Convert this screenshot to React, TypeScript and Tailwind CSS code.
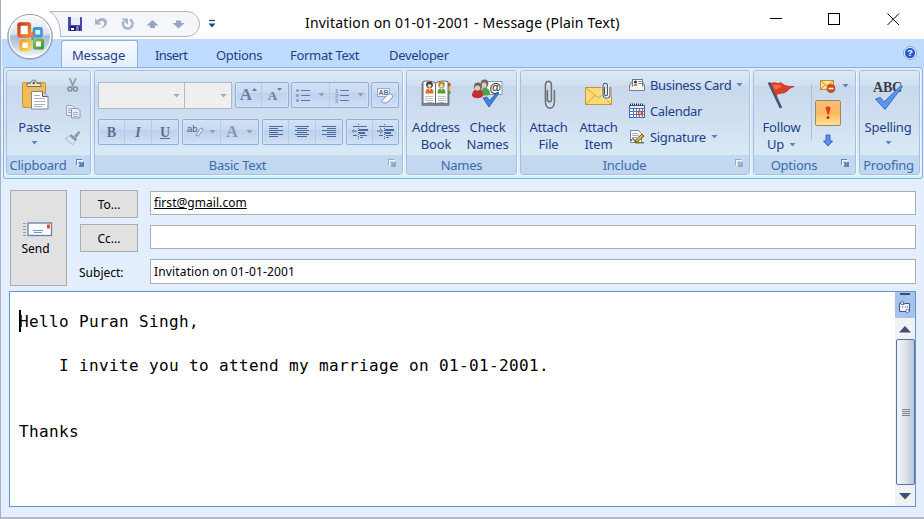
import React from "react";

const INK = "text-[#1e3f8a]";

function T({ children, c = "" }: { children: React.ReactNode; c?: string }) {
  return <span className={`whitespace-pre ${c}`}>{children}</span>;
}

function Caret({ c = "#5e83b8" }: { c?: string }) {
  return (
    <svg width="7" height="4" viewBox="0 0 7 4" className="shrink-0">
      <path d="M.5 0h6L3.500 3.500z" fill={c} />
    </svg>
  );
}

function Launcher({ c }: { c: string }) {
  return (
    <svg width="10" height="10" viewBox="0 0 10 10" className="shrink-0" shapeRendering="crispEdges">
      <path d="M1.500 7V1.500H7" fill="none" stroke={c} />
      <path d="M8.500 4v4.500H4" fill="none" stroke={c} />
      <path d="M4 4h2v1h1v-1h1v4H4v-1h1v-1H4z" fill={c} />
      <path d="M2.500 8V2.500H8" fill="none" stroke="#fff" opacity=".8" />
    </svg>
  );
}

function Group({ w, label, launcher, labelClass = "", children }: { w: string; label: string; launcher?: string; labelClass?: string; children: React.ReactNode }) {
  return (
    <section className={`${w} flex h-[105px] shrink-0 flex-col overflow-hidden rounded-[3px] border border-[#a3c1e2] shadow-[1px_1px_0_#eef6ff]`}>
      <div className="flex h-[84px] bg-[linear-gradient(to_bottom,#dde8f5_0%,#d1dfef_17%,#c7d8ec_18%,#d0dff0_55%,#dae9f6_100%)]">{children}</div>
      <div className="flex h-[19px] items-center bg-linear-to-b from-[#c2d9f1] to-[#c0d8ef]">
        <div className="flex flex-1 justify-center">
          <T c={`text-[13px] leading-[19px] tracking-[-0.25px] text-[#3e6aaa] pt-px ${labelClass}`}>{label}</T>
        </div>
        {launcher && <div className="flex w-[15px] pb-[3px]"><Launcher c={launcher} /></div>}
      </div>
    </section>
  );
}

function Big({ w, icon, children }: { w: string; icon: React.ReactNode; children: React.ReactNode }) {
  return (
    <button className={`${w} flex shrink-0 flex-col items-center text-[13px] leading-[17px] tracking-[-0.2px] ${INK}`}>
      <span className="flex h-[48px] pt-[7px]">{icon}</span>
      {children}
    </button>
  );
}

function Combo({ w }: { w: string }) {
  return (
    <div className={`${w} flex h-[27px] items-center justify-end border border-[#abbac9] bg-[#efefef] pr-1`}>
      <Caret c="#a9a9a9" />
    </div>
  );
}

function Cells({ children, c = "" }: { children: React.ReactNode; c?: string }) {
  return (
    <div className={`flex h-[26px] divide-x divide-[#b3cbea] rounded-[2px] border border-[#8fb0dc] bg-[linear-gradient(to_bottom,#d3e1f3_0%,#c9daf0_40%,#bdd1ec_42%,#cfe0f6_100%)] shadow-[inset_0_0_0_1px_#d3e3f7] ${c}`}>
      {children}
    </div>
  );
}

function Cell({ w, children }: { w: string; children: React.ReactNode }) {
  return <div className={`${w} flex items-center justify-center`}>{children}</div>;
}

function Lines({ rows }: { rows: [number, number][] }) {
  return (
    <svg width="16" height="12" viewBox="0 0 16 12" shapeRendering="crispEdges">
      {rows.map(([x, w], i) => <rect key={i} x={x} y={i * 2} width={w} height="1" fill="#4a689c" />)}
    </svg>
  );
}

function Indent({ right }: { right?: boolean }) {
  return (
    <svg width="18" height="16" viewBox="0 0 18 16" shapeRendering="crispEdges">
      <path d="M2 2.500h14M2 11.500h4M9 11.500h7M9 13.500h3" stroke="#4f6c9e" fill="none" />
      <path d="M8 5h9v2H8zM8 8h6v2H8z" fill="#4a689c" />
      <path d="M7.500 0v16" stroke="#4a689c" strokeDasharray="1 1" />
      <path d={right ? "M6 7L3 4v2H0v2h3v2z" : "M0 7l3-3v2h3v2H3v2z"} fill="#8c9cb8" />
    </svg>
  );
}

function ListIcon({ numbered }: { numbered?: boolean }) {
  return (
    <svg width="14" height="16" viewBox="0 0 14 16">
      <path d="M5 3.500h9M5 8.500h9M5 13.500h9" stroke="#5876ab" />
      {[3.5, 8.5, 13.5].map((y, i) =>
        numbered
          ? <text key={y} x="0" y={y + 2} fontSize="6" fontWeight="700" fill="#8b93a3" fontFamily="Liberation Sans, sans-serif">{i + 1}</text>
          : <circle key={y} cx="1.500" cy={y} r="1.500" fill="#9299a6" />
      )}
    </svg>
  );
}

function OfficeOrb() {
  return (
    <svg width="48" height="48" viewBox="0 0 48 48">
      <defs>
        <linearGradient id="orb" x1="0" y1="0" x2="0" y2="1">
          <stop offset="0" stopColor="#fbfcfe" />
          <stop offset=".44" stopColor="#dde3ed" />
          <stop offset=".5" stopColor="#a9bbd6" />
          <stop offset=".78" stopColor="#cfdaea" />
          <stop offset="1" stopColor="#ffffff" />
        </linearGradient>
        <linearGradient id="or" x1="0" y1="0" x2="1" y2="1"><stop offset="0" stopColor="#c8381a" /><stop offset="1" stopColor="#f58a35" /></linearGradient>
        <linearGradient id="ye" x1="0" y1="0" x2="1" y2="1"><stop offset="0" stopColor="#f9a11b" /><stop offset="1" stopColor="#fcd535" /></linearGradient>
        <linearGradient id="gr" x1="0" y1="0" x2="1" y2="1"><stop offset="0" stopColor="#8cc152" /><stop offset="1" stopColor="#3f9a3a" /></linearGradient>
      </defs>
      <circle cx="24" cy="24" r="23" fill="#8a98ad" opacity=".5" />
      <circle cx="24" cy="23.500" r="22" fill="url(#orb)" stroke="#8f9cb1" />
      <circle cx="24" cy="23.500" r="20.700" fill="none" stroke="#fff" strokeWidth="1.400" opacity=".85" />
      <rect x="13" y="11" width="10.500" height="12" rx="1" fill="#fff" stroke="url(#or)" strokeWidth="3.400" />
      <rect x="28" y="15.500" width="7.500" height="7.500" rx="1" fill="#e8f4fc" stroke="#3d9bd8" strokeWidth="2.800" />
      <rect x="15" y="28" width="8.500" height="8.500" rx="1" fill="#fff" stroke="url(#ye)" strokeWidth="3.200" />
      <rect x="28.500" y="27" width="8" height="8" rx="1" fill="#fff" stroke="url(#gr)" strokeWidth="3.200" />
      <path d="M21 23h5.500v-4" fill="none" stroke="#f07a28" strokeWidth="2.200" />
      <path d="M26.500 24v3" fill="none" stroke="#3d9bd8" strokeWidth="2" />
      <path d="M23 29v-3.500" stroke="#fbc02d" strokeWidth="2.200" />
    </svg>
  );
}

function QuickAccess() {
  return (
    <svg width="170" height="28" viewBox="48 10 170 28">
      <path d="M49.500 11.500H187a12.500 12.500 0 0 1 0 25H60.500C60.500 25 57 15 49.500 11.500z" fill="#f3f6fb" stroke="#b2b4b9" />
      <path d="M68 17h13l1 1v13H68z" fill="#4548b4" />
      <path d="M71 17h9v8h-9z" fill="#e9eefa" />
      <path d="M70 26h10v5H70z" fill="#1f2470" />
      <path d="M71 28h3v2h-3z" fill="#fff" />
      <path d="M76 26h3v5h-3z" fill="#6d73cf" />
      <path d="M95 18v6.500h6.500l-2.300-2.300c3-2.500 5.300-.7 5 1.600-.2 2-1.600 3.300-4.200 4.700 4-.5 6.900-2.600 7.100-5.900.2-4.600-6-6.200-9.900-2.400z" fill="#a7b4cc" />
      <path d="M130 19.500a4.800 4.800 0 1 1-6.500 2" fill="none" stroke="#a7b4cc" strokeWidth="2.600" />
      <path d="M121.500 18.500h6.500v6.500z" fill="#a7b4cc" />
      <path d="M152.500 20l6 5.500H155v2.500h-5v-2.500h-3.500z" fill="#96a5c0" />
      <path d="M178.500 28.500l6-5.500H181v-2.500h-5v2.500h-3.500z" fill="#96a5c0" />
      <path d="M209 20.500h6" stroke="#1c4587" strokeWidth="1.300" />
      <path d="M208.500 23.500h7l-3.500 4z" fill="#1c4587" />
    </svg>
  );
}

function PasteIcon() {
  return (
    <svg width="28" height="32" viewBox="0 0 28 32">
      <rect x="1.500" y="4.500" width="23" height="25" rx="1.500" fill="#f3bb55" stroke="#c9953c" />
      <path d="M6 8.500V5.500h3.500c0-4.500 6.500-4.500 6.500 0h4v3z" fill="#e8e4dc" stroke="#77706a" />
      <circle cx="12.800" cy="5" r="1.300" fill="#555" />
      <path d="M10.500 13.500h11l5.500 5v12.500h-16.500z" fill="#fdfdff" stroke="#7c8799" />
      <path d="M21.500 13.500v5h5" fill="#c8d0de" stroke="#555f70" />
      <path d="M13 17.500h6M13 20.500h11M13 23.500h11M13 26.500h11M13 28.500h8" stroke="#a7b0c0" />
    </svg>
  );
}

function SmallClip() {
  return (
    <div className="flex flex-col items-center gap-[10px] pt-[7px]">
      <svg width="16" height="16" viewBox="0 0 16 16">
        <path d="M4.500 0l4 9M11 0L7 9" stroke="#929eb2" strokeWidth="1.800" />
        <circle cx="5" cy="11" r="2" fill="none" stroke="#7f8ca5" strokeWidth="1.500" />
        <circle cx="10.500" cy="11" r="2" fill="none" stroke="#7f8ca5" strokeWidth="1.500" />
      </svg>
      <svg width="16" height="16" viewBox="0 0 16 16">
        <path d="M1.500 1.500h6l2 2v8h-8z" fill="#e9eef6" stroke="#98a5bd" />
        <path d="M6.500 4.500h6l2.500 2v7.500H6.500z" fill="#e9eef6" stroke="#8d9bb5" />
        <path d="M3 4.500h3M3 6.500h3M3 8.500h3M8 8.500h5M8 10.500h5M8 12.500h5" stroke="#9aa8c0" strokeWidth=".9" />
      </svg>
      <svg width="18" height="16" viewBox="0 0 18 16">
        <path d="M10 6l4.500-5 2 1-4 6z" fill="#8c9ab3" />
        <path d="M7 4l6 5-1.500 2.500L5.500 6z" fill="#8693ab" />
        <path d="M5.500 6L1 8.500l7.500 6 3-3z" fill="#dfe4ec" stroke="#a3aec0" strokeWidth=".8" />
      </svg>
    </div>
  );
}

function Person({ x, hair, body }: { x: number; hair: string; body: string }) {
  return (
    <g transform={`translate(${x} 0)`}>
      <path d="M0 15.500c0-4 1.500-5 4-5s4 1 4 5z" fill={body} />
      <circle cx="4" cy="6.800" r="3.400" fill={hair} />
      <circle cx="4" cy="7.800" r="1.900" fill="#f2d2b2" />
      <path d="M3 10.800h2l-1 2.200z" fill="#fff" />
    </g>
  );
}

function AddressBookIcon() {
  return (
    <svg width="32" height="32" viewBox="0 0 32 32">
      <path d="M1.500 5v23h28V5z" fill="#7f8793" />
      <path d="M3 3.500c5-1 9-.5 12.500 1.500v21C12 24.500 8 24.500 3 26z" fill="#fcfdff" stroke="#5f6672" />
      <path d="M28 3.500c-5-1-9-.5-12.500 1.500v21c3.500-1.500 7.500-1.500 12.500 0z" fill="#fcfdff" stroke="#5f6672" />
      <Person x={5.500} hair="#43403f" body="#e46a1d" />
      <Person x={17.500} hair="#b98d2a" body="#4f9e2f" />
      <path d="M5 18.500h8M5 20.500h8M5 22.500h8M18 18.500h8M18 20.500h8M18 22.500h8" stroke="#b5bfce" />
      <path d="M28.500 5h2v3h-2z" fill="#d33" /><path d="M28.500 9h2v3h-2z" fill="#e7b92a" /><path d="M28.500 13h2v3h-2z" fill="#56a03c" />
    </svg>
  );
}

function CheckNamesIcon() {
  return (
    <svg width="32" height="32" viewBox="0 0 32 32">
      <rect x="14.500" y="3.500" width="15.500" height="13" fill="#fdfdfd" stroke="#8c95a3" />
      <text x="17.500" y="13.500" fontSize="12" fontWeight="700" fill="#333" fontFamily="Liberation Sans, sans-serif">@</text>
      <path d="M8 16c1-5 3-6 5-6s5 1 5 6c-3 2-7 2-10 0z" fill="#4aa24a" />
      <circle cx="12.500" cy="5.500" r="3.900" fill="#6f6865" /><circle cx="12" cy="7" r="2.500" fill="#e4cdb8" />
      <path d="M0 18c0-5 3-7 5.500-7s5.500 1 5.500 7c-3 3-8 3-11 0z" fill="#c82b36" />
      <circle cx="6" cy="8.500" r="4" fill="#6f6865" /><circle cx="5.500" cy="10" r="2.600" fill="#e4cdb8" />
      <path d="M11 20l4-1 2.500 3.500L25.500 14l1.500 1L17 29z" fill="#3d85e0" stroke="#1d55a8" strokeWidth=".8" />
    </svg>
  );
}

function PaperclipIcon() {
  return (
    <svg width="14" height="34" viewBox="0 0 14 34" fill="none" strokeWidth="1.700">
      <path d="M5.500 12v9.500c0 3 4 3 4 0V7.500c0-5.500-6-5.500-6 0v16c0 9 9 9 9 0V12" stroke="#f4f7fa" transform="translate(1 .5)" strokeWidth="1" />
      <path d="M5.500 12v9.500c0 3 4 3 4 0V7.500c0-5.500-6-5.500-6 0v16c0 9 9 9 9 0V12" stroke="#6a7074" />
    </svg>
  );
}

const SMALL_CLIP = "M22.500 10v7c0 2.500 3 2.500 3 0V8.500c0-3.300-4.500-3.300-4.500 0v9c0 5 7 5 7 0V10";

function AttachItemIcon() {
  return (
    <svg width="32" height="32" viewBox="0 0 32 32">
      <rect x="2.500" y="9.500" width="26" height="17" fill="#fbdc72" stroke="#c09b3d" />
      <path d="M3 10l12.500 10L28 10M3 26l9-8.500M28 26l-9-8.500" fill="none" stroke="#d0a544" />
      <path d={SMALL_CLIP} transform="translate(-1 -1)" fill="none" stroke="#fff" strokeWidth="2.600" />
      <path d={SMALL_CLIP} transform="translate(-1 -1)" fill="none" stroke="#4c5a70" strokeWidth="1.200" />
    </svg>
  );
}

function CardIcon() {
  return (
    <svg width="16" height="16" viewBox="0 0 16 16">
      <path d="M.5 8l2-3h11l2 3v5.500H.5z" fill="#cfd5de" stroke="#7b8390" />
      <rect x="3.500" y="2.500" width="10" height="8" fill="#fff" stroke="#6d7684" />
      <circle cx="6.500" cy="5" r="1.600" fill="#333" /><path d="M4.500 9c0-3 4-3 4 0z" fill="#e07b2e" />
      <path d="M9.500 4.500h3M9.500 6.500h3" stroke="#5b7fc0" />
      <path d="M1 9.500h14v3.500H1z" fill="#f1f3f6" />
    </svg>
  );
}

function CalendarIcon() {
  return (
    <svg width="16" height="16" viewBox="0 0 16 16">
      <rect x=".5" y="2.500" width="15" height="12" fill="#fff" stroke="#3c66b0" />
      <path d="M1 3h14v2.500H1z" fill="#dfe9fa" />
      <path d="M1 8.500h14M1 11.500h14M4.500 5v10M7.500 5v10M10.500 5v10M13.500 5v10M1 5.500h14" stroke="#4a76c2" />
      <rect x="9.500" y="8.500" width="3" height="3" fill="#fff" stroke="#e8431f" strokeWidth="1.500" />
      <path d="M1 1.500h14" stroke="#333" strokeWidth="2" strokeDasharray="1 1" />
    </svg>
  );
}

function SignatureIcon() {
  return (
    <svg width="16" height="16" viewBox="0 0 16 16">
      <path d="M1.500 1.500h8l3 3v9h-11z" fill="#fbfcfe" stroke="#7d8795" />
      <path d="M3 4.500h6M3 6.500h7M3 8.500h5" stroke="#9fb2d2" />
      <path d="M2 12c1-3 3-3 3-1s2 1 3 0" stroke="#333" fill="none" />
      <path d="M7 10.500L13 5l2 2-6 5.500-3 .8z" fill="#f3b52c" stroke="#5c451b" strokeWidth=".9" />
      <path d="M8 13h7v1.500H6z" fill="#5a8c36" />
    </svg>
  );
}

function FlagIcon() {
  return (
    <svg width="32" height="32" viewBox="0 0 32 32">
      <path d="M3 4.500L15 30" stroke="#3f547e" strokeWidth="2.800" />
      <path d="M4.500 6c4-3 7 1 10.500-1.500 3 3.500 6 4 13 4-4 1-5 3-7.500 5-4 3-6 0-10.500 4z" fill="#df3f22" stroke="#b52a12" strokeWidth=".8" />
      <path d="M7 7.500c3-2 5 .5 8-.5 1 3-4 4-6 5z" fill="#f0694a" />
    </svg>
  );
}

function SpellIcon() {
  return (
    <svg width="32" height="34" viewBox="0 0 32 34">
      <text x="1" y="13.500" fontSize="15" fontWeight="700" fill="#3a3f48" textLength="29" lengthAdjust="spacingAndGlyphs" fontFamily="Liberation Serif, serif">ABC</text>
      <path d="M3.500 21l5-1.500 3.500 4.500L29 7.500l1.500 1L13 31.500z" fill="#5b95ec" stroke="#2a62bd" strokeWidth=".9" />
    </svg>
  );
}

function Field({ h, children }: { h: string; children?: React.ReactNode }) {
  return <div className={`${h} flex flex-1 items-center border border-[#abadb3] bg-white pl-[3px] text-[12px] leading-4 text-black`}>{children}</div>;
}

function PushButton({ children }: { children: React.ReactNode }) {
  return <button className="flex h-7 w-[58px] items-center justify-center border border-[#adadad] bg-[#e1e1e1] pt-px text-[12px] leading-4 text-black">{children}</button>;
}

export default function App() {
  return (
    <div className="flex h-[519px] w-[924px] flex-col overflow-hidden border-b-2 border-l border-b-[#b4bac4] border-l-[#a9b0bd] bg-[#e3efff] font-['Noto_Sans','Open_Sans',sans-serif]">
      <header className="relative flex h-[39px] shrink-0 bg-white">
        <div className="absolute top-[13px] left-[5px] z-10"><OfficeOrb /></div>
        <div className="ml-[47px] h-7 w-[170px] pt-[10px]"><QuickAccess /></div>
        <div className="ml-[87px] pt-[10px]"><T c="text-[14px] leading-5 tracking-[0.2px] text-black">Invitation on 01-01-2001 - Message (Plain Text)</T></div>
        <svg width="132" height="14" viewBox="0 0 132 14" className="mt-3 mr-[22px] ml-auto" fill="none" stroke="#000">
          <path d="M0 6.500h12" /><rect x="58.500" y="1.500" width="11" height="11" /><path d="M117.500 1.500l11.500 11.500M129 1.500L117.500 13" />
        </svg>
      </header>

      <nav className={`ml-px flex h-7 shrink-0 items-end bg-[#bfdbff] text-[13px] ${INK}`}>
        <div className="ml-[59px] flex h-[27px] w-[77px] justify-center rounded-t-[3px] border border-b-0 border-[#8db2e3] bg-linear-to-b from-[#f8fbff] to-[#e4effb] pt-1 pr-[2px] leading-[20px]"><T c="tracking-[-0.15px]">Message</T></div>
        <div className="flex h-[27px] pt-[5px] leading-5 tracking-[-0.3px]">
          <div className="ml-[17px] w-[61px]"><T c="tracking-[-0.6px]">Insert</T></div>
          <div className="w-[74px]"><T>Options</T></div>
          <div className="w-[99px]"><T>Format Text</T></div>
          <T>Developer</T>
        </div>
        <svg width="14" height="14" viewBox="0 0 14 14" className="mr-[7px] mb-[7px] ml-auto">
          <circle cx="7" cy="7" r="6.500" fill="#fff" stroke="#8a9fc4" /><circle cx="7" cy="7" r="5.200" fill="#1f5fd0" />
          <text x="4.300" y="10.300" fontSize="9" fontWeight="700" fill="#fff" fontFamily="Liberation Sans, sans-serif">?</text>
        </svg>
      </nav>

      <div className="mr-px ml-[2px] flex h-[112px] shrink-0 gap-[3px] rounded-[3px] border border-[#8db2e3] border-b-[#8fb4dc] bg-linear-to-b from-[#dfeaf7] via-[#d2e1f4] to-[#e4f3fb] pt-[2px] pl-[2px] shadow-[inset_0_-2px_0_#cdf5fb]">
        <Group w="w-[85px]" label="Clipboard" launcher="#5f83b6" labelClass="ml-[-6px]">
          <Big w="w-[55px]" icon={<PasteIcon />}><T>Paste</T><span className="mt-[5px]"><Caret /></span></Big>
          <div className="ml-px w-[20px]"><SmallClip /></div>
        </Group>
        <Group w="w-[309px]" label="Basic Text" launcher="#9aa9bd" labelClass="ml-[-7px]">
          <div className="flex flex-col gap-[10px] pt-[11px] pl-[3px]">
            <div className="flex">
              <Combo w="w-[87px]" /><Combo w="-ml-px w-[48px]" />
              <Cells c="ml-[3px]">
                <Cell w="w-[26px]"><span className="font-['Liberation_Serif',serif] text-[17px] font-bold text-[#6a7d9f]">A</span><span className="mb-3"><svg width="5" height="3"><path d="M0 3h5L2.500 0z" fill="#6a7d9f" /></svg></span></Cell>
                <Cell w="w-[26px]"><span className="pt-px font-['Liberation_Serif',serif] text-[13px] font-bold text-[#6a7d9f]">A</span><span className="mb-3"><svg width="5" height="3"><path d="M0 0h5L2.500 3z" fill="#6a7d9f" /></svg></span></Cell>
              </Cells>
              <Cells c="ml-[2px]">
                <Cell w="w-[38px] gap-2"><ListIcon /><Caret c="#9c9c9c" /></Cell>
                <Cell w="w-[38px] gap-2"><ListIcon numbered /><Caret c="#9c9c9c" /></Cell>
              </Cells>
              <Cells c="ml-[2px]">
                <Cell w="w-[26px]">
                  <svg width="18" height="18" viewBox="0 0 18 18">
                    <rect x="1.500" y="2.500" width="12" height="8" fill="#f2f6fc" stroke="#9aabc8" />
                    <text x="2.500" y="9" fontSize="7" fontWeight="700" fill="#5a6f99" fontFamily="Liberation Sans, sans-serif">AB</text>
                    <path d="M6 14.500l6-6c2-2 6 1 4 3.500L11 16.500c-3 1.500-6-.5-5-2z" fill="#f4f6fa" stroke="#8592ab" />
                  </svg>
                </Cell>
              </Cells>
            </div>
            <div className="flex gap-[3px] font-['Liberation_Serif',serif] text-[14px] text-[#5b7099]">
              <Cells>
                <Cell w="w-[26px]"><b>B</b></Cell><Cell w="w-[27px]"><i className="font-bold">I</i></Cell><Cell w="w-[26px]"><b className="underline">U</b></Cell>
              </Cells>
              <Cells>
                <Cell w="w-[38px] gap-1">
                  <svg width="18" height="16" viewBox="0 0 18 16">
                    <text x="0" y="8" fontSize="9.500" fill="#4a5f8a" fontFamily="Liberation Sans, sans-serif">ab</text>
                    <path d="M9 11.500L13.500 4l3 1-5 7z" fill="#e4e9f1" stroke="#8a97ae" />
                  </svg>
                  <Caret c="#9c9c9c" />
                </Cell>
                <Cell w="w-[37px] gap-2"><span className="text-[16px] font-bold text-[#8794b3]">A</span><Caret c="#9c9c9c" /></Cell>
              </Cells>
              <Cells>
                <Cell w="w-[26px]"><Lines rows={[[1, 14], [1, 9], [1, 14], [1, 9], [1, 14], [1, 9]]} /></Cell>
                <Cell w="w-[27px]"><Lines rows={[[1, 14], [3, 10], [1, 14], [3, 10], [1, 14], [3, 10]]} /></Cell>
                <Cell w="w-[26px]"><Lines rows={[[1, 14], [6, 9], [1, 14], [6, 9], [1, 14], [6, 9]]} /></Cell>
              </Cells>
              <Cells><Cell w="w-[26px]"><Indent /></Cell><Cell w="w-[25px]"><Indent right /></Cell></Cells>
            </div>
          </div>
        </Group>
        <Group w="w-[111px]" label="Names">
          <Big w="w-[58px]" icon={<AddressBookIcon />}><T>Address</T><T>Book</T></Big>
          <Big w="w-[45px]" icon={<CheckNamesIcon />}><T>Check</T><T>Names</T></Big>
        </Group>
        <Group w="w-[230px]" label="Include" launcher="#9aa9bd" labelClass="ml-[-6px]">
          <Big w="ml-[2px] w-[51px]" icon={<PaperclipIcon />}><T>Attach</T><T>File</T></Big>
          <Big w="w-[49px]" icon={<AttachItemIcon />}><T>Attach</T><T>Item</T></Big>
          <div className={`ml-[6px] flex flex-col pt-[1px] text-[13px] leading-4 tracking-[-0.35px] ${INK}`}>
            <div className="flex h-[26px] items-center gap-[5px]"><CardIcon /><T>Business Card</T><Caret /></div>
            <div className="flex h-[26px] items-center gap-[5px]"><CalendarIcon /><T>Calendar</T></div>
            <div className="flex h-[26px] items-center gap-[5px]"><SignatureIcon /><T>Signature</T><Caret /></div>
          </div>
        </Group>
        <Group w="w-[103px]" label="Options" launcher="#5f83b6" labelClass="ml-[-6px]">
          <Big w="w-[55px]" icon={<FlagIcon />}><T>Follow</T><span className="flex items-center gap-[5px]"><T>Up</T><Caret /></span></Big>
          <div className="mt-[13px] ml-[2px] h-[56px] w-px bg-[#a9bfdc]" />
          <div className="ml-[3px] flex flex-col items-start">
            <div className="mt-[7px] flex h-4 items-center gap-[6px] pl-[5px]">
              <svg width="16" height="14" viewBox="0 0 16 14">
                <rect x=".5" y="1.500" width="13" height="9" fill="#fbe08a" stroke="#b8923c" /><path d="M1 2l6 5 6-5M1 10l4-4M13 10L9 6" fill="none" stroke="#b8923c" strokeWidth=".9" />
                <circle cx="11" cy="9.500" r="4" fill="#dd4a22" stroke="#a83212" strokeWidth=".7" /><path d="M8.500 9.500h5" stroke="#fff" strokeWidth="1.600" />
              </svg>
              <Caret />
            </div>
            <div className="mt-[6px] flex h-[26px] w-[26px] items-center justify-center rounded-[2px] border border-[#a5865a] bg-linear-to-b from-[#f5bd78] via-[#fcb85c] to-[#ffe19a]">
              <svg width="8" height="14" viewBox="0 0 8 14"><path d="M1.500 2c0-2 5-2 5 0L5 8.500H3.500z" fill="#e23c1d" /><circle cx="4" cy="11.500" r="1.500" fill="#c8311a" /></svg>
            </div>
            <svg width="12" height="14" viewBox="0 0 12 14" className="mt-[8px] ml-[7px]"><path d="M4 1h4v6h2.500L6 12 1.500 7H4z" fill="#5f92ec" stroke="#2b57b5" strokeWidth=".9" /></svg>
          </div>
        </Group>
        <Group w="w-[61px]" label="Proofing" labelClass="ml-[-2px]">
          <Big w="w-[56px]" icon={<SpellIcon />}><T>Spelling</T><span className="mt-[5px]"><Caret /></span></Big>
        </Group>
      </div>

      <div className="mt-[11px] flex h-[96px] shrink-0 pr-[8px] pl-[9px]">
        <button className="flex w-[57px] flex-col items-center border border-[#adadad] bg-[#e1e1e1] pt-[30px] text-[12px] leading-4 text-black">
          <svg width="30" height="16" viewBox="0 0 30 16" className="mr-[2px]">
            <path d="M0 2.500h3M0 5.500h3M0 8.500h3M0 11.500h3M0 14.500h3" stroke="#8c9cba" />
            <rect x="5" y="2" width="23.500" height="12.500" fill="#fafbfe" stroke="#6a7fae" strokeWidth="1.300" />
            <path d="M10 9.500h10M11 11.500h8" stroke="#7d93bd" /><path d="M24 3.500h3v4h-3z" fill="#e05030" />
          </svg>
          <span className="mt-[4px] mr-[6px]"><T>Send</T></span>
        </button>
        <div className="ml-[13px] flex flex-1 flex-col">
          <div className="flex h-[34px]"><PushButton><T>To...</T></PushButton><div className="mt-px ml-3 flex flex-1"><Field h="h-6"><T c="underline tracking-[0.05px]">first@gmail.com</T></Field></div></div>
          <div className="flex h-[34px]"><PushButton><T>Cc...</T></PushButton><div className="mt-px ml-3 flex flex-1"><Field h="h-6" /></div></div>
          <div className="flex h-[28px]"><div className="-ml-px flex w-[59px] items-center text-[12px] leading-4 text-black"><T c="pt-px">Subject:</T></div><div className="mt-px ml-3 flex flex-1"><Field h="h-[25px]"><T c="tracking-[0.15px]">Invitation on 01-01-2001</T></Field></div></div>
        </div>
      </div>

      <div className="mt-[5px] mr-[8px] ml-[8px] flex h-[216px] shrink-0 border border-[#6593cf] bg-white">
        <div className="flex flex-1 pt-[18px] pl-[9px]">
          <div className="-mr-[2px] h-[22px] w-[2px] bg-black" />
          <div className="pt-px font-['DejaVu_Sans_Mono',monospace] text-[16px] leading-[22px] tracking-[0.367px] whitespace-pre text-black">
            <div>Hello Puran Singh,</div><br />
            <div>    I invite you to attend my marriage on 01-01-2001.</div><br /><br />
            <div>Thanks</div>
          </div>
        </div>
        <div className="flex w-[20px] shrink-0 flex-col bg-[#f2f2f2]">
          <div className="flex h-[26px] flex-col items-center bg-[#a4c3ee] pt-px">
            <div className="h-[2px] w-[10px] bg-[#3b4c70]" />
            <svg width="14" height="14" viewBox="0 0 14 14" className="mt-[5px]">
              <path d="M1.500 3.500h3l1 1.500 1-1.500h5v8h-10z" fill="#eef4fd" stroke="#46577c" /><circle cx="4" cy="3" r="1.500" fill="#fff" stroke="#46577c" strokeWidth=".8" /><circle cx="9.500" cy="11" r="1.700" fill="#fff" stroke="#46577c" strokeWidth=".8" /><path d="M4 7h2M7 7h3" stroke="#46577c" strokeDasharray="1 1" />
            </svg>
          </div>
          <div className="flex h-[21px] items-center justify-center pt-px"><svg width="12" height="7"><path d="M0 6.500h12L6 0z" fill="#3f4f77" /></svg></div>
          <div className="ml-px flex h-[146px] flex-col items-center justify-center gap-px rounded-[2px] border border-[#5a6f9d] bg-linear-to-r from-[#f3f5f8] via-[#dfe6ee] via-45% to-[#b7c7da]">
            {[0, 1, 2, 3].map((i) => <div key={i} className="h-px w-2 bg-[#7c8591]" />)}
          </div>
          <div className="flex h-[21px] items-center justify-center pt-[2px]"><svg width="12" height="7"><path d="M0 0h12L6 6.500z" fill="#3f4f77" /></svg></div>
        </div>
      </div>
    </div>
  );
}
